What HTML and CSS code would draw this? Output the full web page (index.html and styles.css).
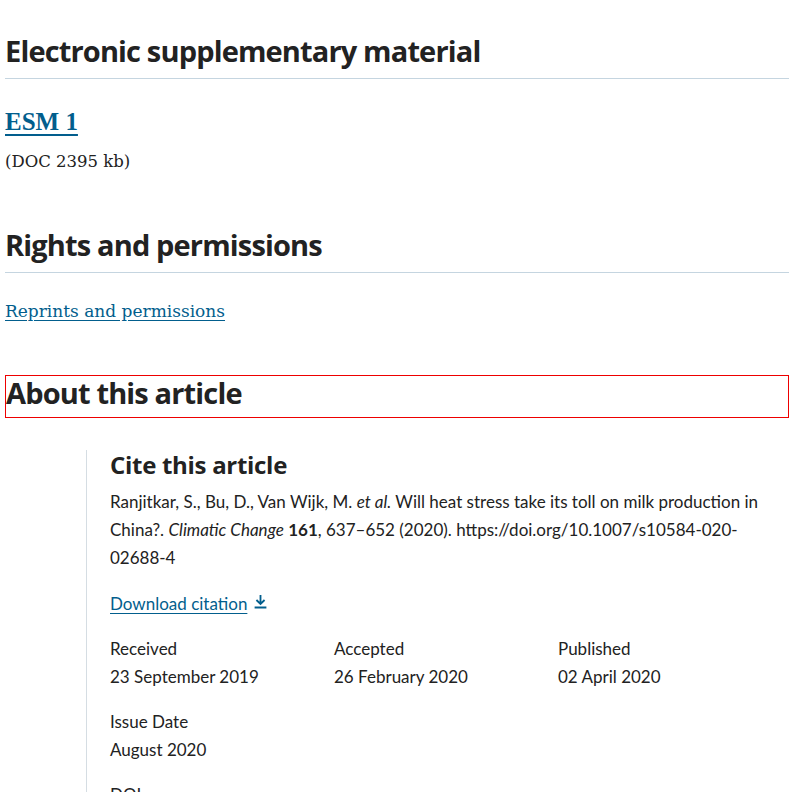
FILE: index.html
```html
<!DOCTYPE html>
<html lang="en">
<head>
<meta charset="utf-8">
<title>Article</title>
<link rel="stylesheet" href="styles.css">
</head>
<body>
<main class="page">
  <section class="section">
    <h2 class="section-title">Electronic supplementary material</h2>
    <div class="esm">
      <h3 class="esm-title"><a href="#">ESM 1</a></h3>
      <p class="esm-meta">(DOC 2395 kb)</p>
    </div>
  </section>
  <section class="section">
    <h2 class="section-title">Rights and permissions</h2>
    <p class="rights"><a href="#">Reprints and permissions</a></p>
  </section>
  <section class="section about">
    <h2 class="about-title">About this article</h2>
    <div class="cite-box">
      <h3 class="cite-title">Cite this article</h3>
      <p class="citation">Ranjitkar, S., Bu, D., Van Wijk, M. <i>et al.</i> Will heat stress take its toll on milk production in China?. <i>Climatic Change</i> <b>161</b>, 637–652 (2020). https://doi.org/10.1007/s10584-020-02688-4</p>
      <p class="download"><a href="#">Download citation</a><svg class="dl-icon" width="15" height="15" viewBox="0 0 14 14"><path d="M7 1v8M3.2 5.6L7 9.3l3.8-3.7M1.5 12.6h11" fill="none" stroke="#025e8d" stroke-width="1.7"/></svg></p>
      <ul class="dates">
        <li><span class="label">Received</span><span class="value">23 September 2019</span></li>
        <li><span class="label">Accepted</span><span class="value">26 February 2020</span></li>
        <li><span class="label">Published</span><span class="value">02 April 2020</span></li>
        <li><span class="label">Issue Date</span><span class="value">August 2020</span></li>
        <li class="wide"><span class="label">DOI</span><span class="value">https://doi.org/10.1007/s10584-020-02688-4</span></li>
      </ul>
    </div>
  </section>
</main>
</body>
</html>
```
FILE: styles.css
```css
html, body { margin: 0; padding: 0; background: #fff; }
body { color: #222; font-family: "Lato", "Open Sans", sans-serif; }
.page { padding: 0 3px 0 5px; }
a { color: #025e8d; }
.section-title {
  font-family: "Open Sans", sans-serif;
  font-weight: 700;
  font-size: 29px;
  line-height: 40px;
  margin: 0;
  padding: 31px 0 7px;
  border-bottom: 1px solid #c5d5e0;
  letter-spacing: -0.85px;
}
.esm { padding: 27px 0 19px; }
.esm-title {
  margin: 0;
  font-family: "Liberation Serif", serif;
  font-weight: 700;
  font-size: 25px;
  line-height: 32px;
}
.esm-title a { text-decoration-thickness: 2px; text-underline-offset: 4px; }
.esm-meta {
  margin: 11px 0 0;
  font-family: "DejaVu Serif", serif;
  font-size: 16.5px;
  line-height: 26px;
}
.rights {
  margin: 24px 0 0;
  font-family: "DejaVu Serif", serif;
  font-size: 17px;
  line-height: 28px;
}
.rights a { text-underline-offset: 3px; }
.about { padding-top: 50px; }
.about-title {
  margin: 0;
  border: 1px solid #e00;
  font-family: "Open Sans", sans-serif;
  font-weight: 700;
  font-size: 29px;
  line-height: 34px;
  padding: 0 0 7px;
  letter-spacing: -0.85px;
}
.cite-box {
  margin: 32px 0 0 81px;
  border-left: 1px solid #d5dde3;
  padding-left: 23px;
}
.cite-title {
  margin: 0;
  font-family: "Open Sans", sans-serif;
  font-weight: 700;
  font-size: 24px;
  line-height: 30px;
  letter-spacing: -0.3px;
}
.citation {
  margin: 8px 0 0;
  font-size: 17px;
  line-height: 28px;
}
.download { margin: 18px 0 0; font-size: 17px; line-height: 28px; display: flex; align-items: center; gap: 6px; }
.download a { text-underline-offset: 3px; }
.dl-icon { margin-top: -5px; }
.dates {
  list-style: none;
  margin: 17px 0 0;
  padding: 0;
  display: grid;
  grid-template-columns: 224px 224px 224px;
  row-gap: 17px;
  font-size: 17px;
  line-height: 28px;
}
.dates li { display: flex; flex-direction: column; }
.dates .wide { grid-column: 1 / -1; }
```
